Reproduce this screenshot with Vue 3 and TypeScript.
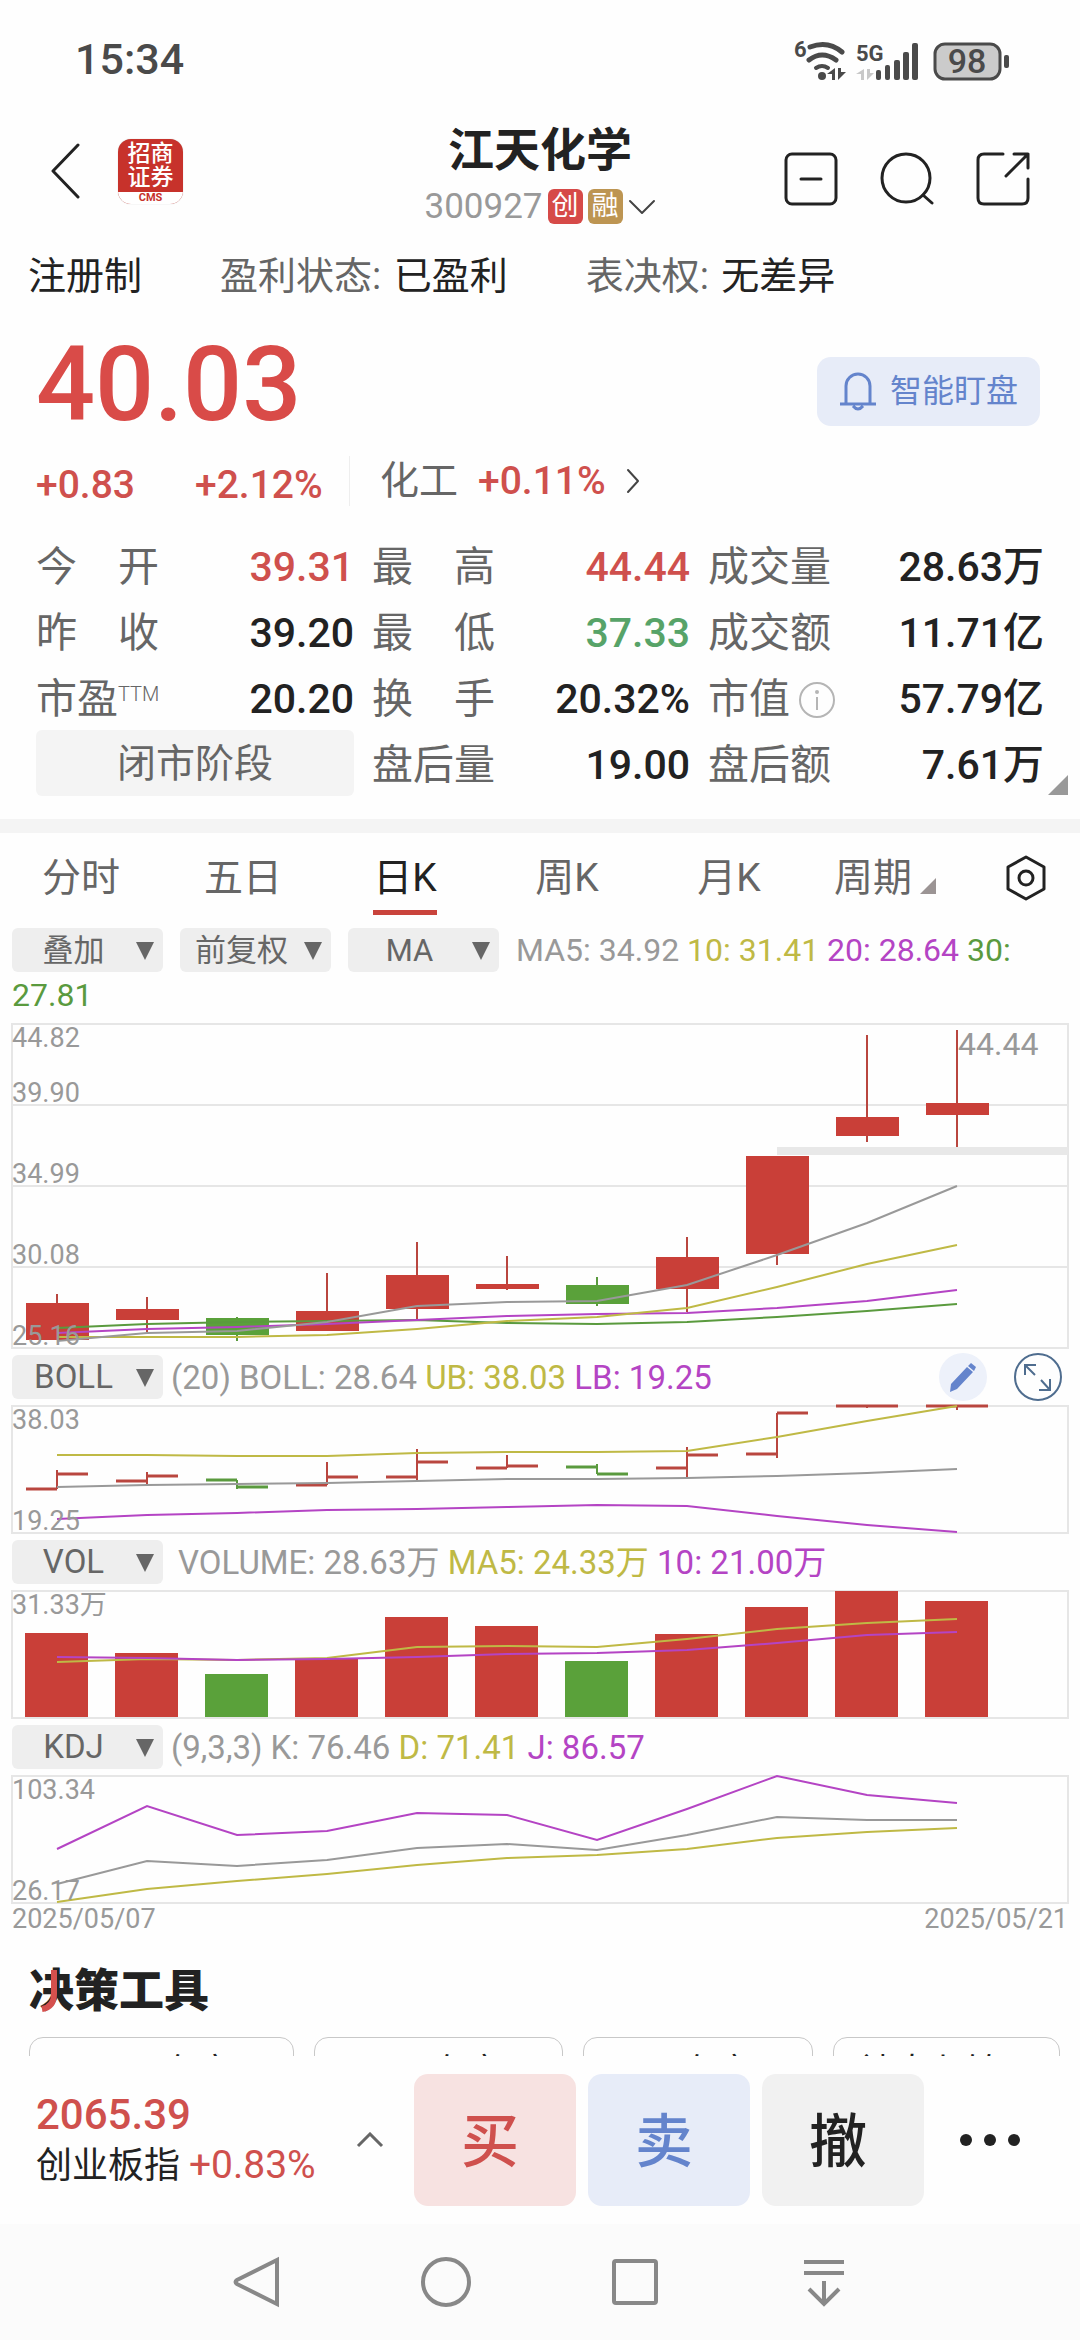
<script setup lang="ts">
interface Metric {
  label: string
  value: string
  tone?: 'up' | 'down'
  sup?: string
  info?: boolean
}
interface Reading {
  text: string
  tone: 'grey' | 'yellow' | 'purple' | 'green'
}
interface Line {
  tone: string
  ys: number[]
}
interface AxisLabel {
  text: string
  y: number
}

const STEP = 90
const FIRST = 45
const BAR = 63
const cx = (i: number): number => FIRST + STEP * i
const points = (ys: number[]): string => ys.map((y, i) => `${cx(i)},${y}`).join(' ')

const metrics: Metric[] = [
  { label: '今 开', value: '39.31', tone: 'up' },
  { label: '最 高', value: '44.44', tone: 'up' },
  { label: '成交量', value: '28.63万' },
  { label: '昨 收', value: '39.20' },
  { label: '最 低', value: '37.33', tone: 'down' },
  { label: '成交额', value: '11.71亿' },
  { label: '市盈', sup: 'TTM', value: '20.20' },
  { label: '换 手', value: '20.32%' },
  { label: '市值', info: true, value: '57.79亿' },
]
const afterHours: Metric[] = [
  { label: '盘后量', value: '19.00' },
  { label: '盘后额', value: '7.61万' },
]

const tabs: string[] = ['分时', '五日', '日K', '周K', '月K']
const activeTab = '日K'

const maReadings: Reading[] = [
  { text: 'MA5: 34.92', tone: 'grey' },
  { text: '10: 31.41', tone: 'yellow' },
  { text: '20: 28.64', tone: 'purple' },
  { text: '30: 27.81', tone: 'green' },
]

// [body top, body bottom, high, low]
const candles: number[][] = [
  [279, 316, 270, 316],
  [285, 296, 273, 308],
  [294, 311, 293, 317],
  [287, 307, 249, 307],
  [251, 285, 218, 296],
  [260, 265, 232, 266],
  [261, 280, 253, 282],
  [233, 265, 213, 288],
  [132, 230, 132, 241],
  [93, 112, 11, 118],
  [79, 91, 6, 123],
]
const falling = (i: number): boolean => i === 2 || i === 6

const priceLines: Line[] = [
  { tone: 'green', ys: [304, 300, 298, 297, 296, 299, 300, 298, 293, 287, 280] },
  { tone: 'purple', ys: [309, 305, 303, 300, 296, 292, 290, 289, 284, 277, 266] },
  { tone: 'yellow', ys: [313, 313, 313, 311, 305, 297, 293, 284, 263, 240, 221] },
  { tone: 'grey', ys: [317, 309, 307, 298, 282, 278, 277, 261, 231, 199, 162] },
]
const priceLabels: AxisLabel[] = [
  { text: '44.82', y: 23 },
  { text: '39.90', y: 78 },
  { text: '34.99', y: 159 },
  { text: '30.08', y: 240 },
  { text: '25.16', y: 321 },
]

// [open, close, high, low]
const ohlc: number[][] = [
  [83, 68, 64, 83],
  [75, 70, 66, 80],
  [74, 81, 74, 83],
  [79, 71, 56, 79],
  [71, 56, 43, 75],
  [62, 60, 49, 62],
  [61, 68, 58, 68],
  [62, 49, 41, 72],
  [48, 7, 7, 52],
  [0, 0, 0, 2],
  [0, 0, 0, 4],
]
const volumes: number[] = [42, 62, 83, 68, 26, 35, 70, 43, 16, 0, 10]

interface Panel {
  name: string
  wide: boolean
  readings: Reading[]
  lines: Line[]
  labels: AxisLabel[]
}
const panels: Panel[] = [
  {
    name: 'BOLL',
    wide: false,
    readings: [
      { text: '(20) BOLL: 28.64', tone: 'grey' },
      { text: 'UB: 38.03', tone: 'yellow' },
      { text: 'LB: 19.25', tone: 'purple' },
    ],
    lines: [
      { tone: 'grey', ys: [81, 79, 78, 77, 75, 73, 73, 72, 70, 67, 63] },
      { tone: 'yellow', ys: [49, 49, 50, 50, 47, 46, 46, 45, 31, 15, 0] },
      { tone: 'purple', ys: [113, 109, 107, 104, 103, 101, 99, 100, 110, 119, 126] },
    ],
    labels: [{ text: '38.03', y: 23 }, { text: '19.25', y: 124 }],
  },
  {
    name: 'VOL',
    wide: true,
    readings: [
      { text: 'VOLUME: 28.63万', tone: 'grey' },
      { text: 'MA5: 24.33万', tone: 'yellow' },
      { text: '10: 21.00万', tone: 'purple' },
    ],
    lines: [
      { tone: 'yellow', ys: [71, 68, 69, 67, 56, 55, 56, 48, 38, 32, 28] },
      { tone: 'purple', ys: [66, 67, 69, 68, 66, 63, 62, 59, 52, 44, 41] },
    ],
    labels: [{ text: '31.33万', y: 23 }],
  },
  {
    name: 'KDJ',
    wide: false,
    readings: [
      { text: '(9,3,3) K: 76.46', tone: 'grey' },
      { text: 'D: 71.41', tone: 'yellow' },
      { text: 'J: 86.57', tone: 'purple' },
    ],
    lines: [
      { tone: 'grey', ys: [108, 85, 90, 84, 72, 68, 74, 59, 41, 44, 44] },
      { tone: 'yellow', ys: [126, 113, 105, 98, 89, 82, 79, 73, 62, 56, 52] },
      { tone: 'purple', ys: [73, 30, 59, 55, 37, 39, 64, 33, 0, 19, 27] },
    ],
    labels: [{ text: '103.34', y: 23 }, { text: '26.17', y: 124 }],
  },
]

const tools: string[] = ['MACD 有变？', 'BOLL 有变？', 'KDJ 有变？', '神奇九转？', '主力动向？']
</script>

<template>
  <div class="app">
    <div class="status">
      <span class="clock">15:34</span>
      <svg class="signals" width="216" height="44" viewBox="0 0 216 44" aria-hidden="true">
        <text x="0" y="19" class="sig-small">6</text>
        <g fill="none" stroke="#4a4a4a" stroke-width="5" stroke-linecap="round">
          <path d="M16 9Q34 2 48 14" />
          <path d="M15 22Q28 12 42 22" />
          <path d="M22 30Q28 26 34 30" stroke-width="4" />
        </g>
        <circle cx="28" cy="38" r="4" fill="#4a4a4a" />
        <g fill="#4a4a4a">
          <path d="M41 30v12h-3v-6h-5zM44 42V30h3v4h5z" />
        </g>
        <text x="62" y="23" class="sig-net">5G</text>
        <path d="M70 31v11h-3v-6h-5zM73 42V31h3v4h4z" fill="#c8c8c8" />
        <g fill="#4a4a4a">
          <rect x="82" y="32" width="5" height="10" rx="2" />
          <rect x="91" y="27" width="5" height="15" rx="2" />
          <rect x="100" y="22" width="6" height="20" rx="2" />
          <rect x="109" y="14" width="6" height="28" rx="2" />
          <rect x="118" y="5" width="6" height="37" rx="2" />
        </g>
        <rect x="141" y="6" width="65" height="35" rx="10" fill="#cbcbcb" stroke="#4a4a4a" stroke-width="3" />
        <rect x="210" y="17" width="5" height="13" rx="2" fill="#4a4a4a" />
        <text x="173" y="35" text-anchor="middle" class="sig-bat">98</text>
      </svg>
    </div>

    <header class="header">
      <div class="header-left">
        <button class="bare" aria-label="返回">
          <svg width="30" height="56" viewBox="0 0 30 56"><path d="M28 2L3 28L28 54" class="stroke-dark" /></svg>
        </button>
        <div class="logo">
          <span class="logo-name">招商<br />证券</span>
          <span class="logo-code">CMS</span>
        </div>
      </div>
      <div class="header-mid">
        <h1>江天化学</h1>
        <div class="code">
          <span>300927</span>
          <i class="badge badge-red">创</i>
          <i class="badge badge-gold">融</i>
          <svg width="28" height="16" viewBox="0 0 28 16"><path d="M2 2L14 14L26 2" class="stroke-dark thin" /></svg>
        </div>
      </div>
      <div class="header-right">
        <button class="bare" aria-label="移除自选">
          <svg width="54" height="54" viewBox="0 0 54 54">
            <rect x="2" y="2" width="50" height="50" rx="6" class="stroke-dark" />
            <path d="M17 27H37" class="stroke-dark" />
          </svg>
        </button>
        <button class="bare" aria-label="搜索">
          <svg width="54" height="54" viewBox="0 0 54 54">
            <circle cx="26" cy="26" r="24" class="stroke-dark" />
            <path d="M43 43L52 51" class="stroke-dark" />
          </svg>
        </button>
        <button class="bare" aria-label="分享">
          <svg width="54" height="54" viewBox="0 0 54 54">
            <path d="M27 2H8Q2 2 2 8V46Q2 52 8 52H46Q52 52 52 46V27M38 2H52V16M52 2L30 24" class="stroke-dark" />
          </svg>
        </button>
      </div>
    </header>

    <main class="content">
      <section class="facts">
        <span class="plain">注册制</span>
        <span>盈利状态: <b>已盈利</b></span>
        <span>表决权: <b>无差异</b></span>
      </section>

      <section class="price">
        <div class="price-top">
          <strong>40.03</strong>
          <button class="watch">
            <svg width="38" height="40" viewBox="0 0 38 40" aria-hidden="true">
              <path d="M7 33V15a12 12 0 0 1 24 0v18M1 33H37M14 35Q19 41 24 35" fill="none" stroke="#6484cc" stroke-width="3" />
            </svg>
            <span>智能盯盘</span>
          </button>
        </div>
        <div class="price-sub">
          <span class="change">+0.83</span>
          <span class="change">+2.12%</span>
          <a href="#sector" class="sector">
            <span>化工</span><em>+0.11%</em>
            <svg width="14" height="26" viewBox="0 0 14 26"><path d="M2 2L12 13L2 24" class="stroke-dark thin" /></svg>
          </a>
        </div>
      </section>

      <section class="metrics">
        <dl>
          <div v-for="m in metrics" :key="m.label" class="metric">
            <dt :class="{ spread: !m.sup && !m.info }">
              {{ m.label }}<sup v-if="m.sup">{{ m.sup }}</sup>
              <svg v-if="m.info" width="38" height="38" viewBox="0 0 38 38">
                <circle cx="19" cy="19" r="17" fill="none" stroke="#b5b5b5" stroke-width="2" />
                <circle cx="19" cy="11" r="2" fill="#b5b5b5" />
                <path d="M19 16V29" stroke="#b5b5b5" stroke-width="2" />
              </svg>
            </dt>
            <dd :class="m.tone">{{ m.value }}</dd>
          </div>
          <div class="phase">闭市阶段</div>
          <div v-for="m in afterHours" :key="m.label" class="metric">
            <dt class="spread">{{ m.label }}</dt>
            <dd>{{ m.value }}</dd>
          </div>
        </dl>
        <svg class="corner" width="20" height="20" viewBox="0 0 20 20" aria-hidden="true"><path d="M20 0V20H0Z" fill="#999" /></svg>
      </section>

      <nav class="tabs">
        <button v-for="t in tabs" :key="t" class="tab" :class="{ active: t === activeTab }"><span>{{ t }}</span></button>
        <button class="tab period">
          <span>周期</span>
          <svg width="16" height="16" viewBox="0 0 16 16" aria-hidden="true"><path d="M16 0V16H0Z" fill="#9b9494" /></svg>
        </button>
        <button class="tab" aria-label="设置">
          <svg width="42" height="46" viewBox="0 0 42 46">
            <path d="M21 2L39 12V34L21 44L3 34V12Z" class="stroke-dark" />
            <circle cx="21" cy="23" r="7" class="stroke-dark" />
          </svg>
        </button>
      </nav>

      <section class="charts">
        <div class="ma-row">
          <label class="picker"><select aria-label="叠加"><option>叠加</option></select><i></i></label>
          <label class="picker"><select aria-label="复权方式"><option>前复权</option></select><i></i></label>
          <label class="picker"><select aria-label="主图指标"><option>MA</option></select><i></i></label>
          <span v-for="r in maReadings" :key="r.text" :class="r.tone">{{ r.text + ' ' }}</span>
        </div>
        <svg class="plot" viewBox="0 0 1056 324" role="img" aria-label="日K线图">
          <path d="M0 81H1056M0 162H1056M0 243H1056" class="grid" />
          <rect x="0" y="0" width="1056" height="324" class="grid" />
          <rect x="765" y="123" width="291" height="8" fill="#e8e8e8" />
          <g v-for="(c, i) in candles" :key="i" :class="falling(i) ? 'fall' : 'rise'">
            <path :d="`M${cx(i)} ${c[2]}V${c[3]}`" />
            <rect :x="cx(i) - 31" :y="c[0]" :width="BAR" :height="c[1] - c[0]" />
          </g>
          <polyline v-for="l in priceLines" :key="l.tone" :points="points(l.ys)" class="line" :class="`line-${l.tone}`" />
          <text v-for="a in priceLabels" :key="a.text" x="0" :y="a.y" class="axis">{{ a.text }}</text>
          <text x="946" y="31" class="peak">44.44</text>
        </svg>

        <template v-for="p in panels" :key="p.name">
          <div class="panel-head">
            <label class="picker"><select :aria-label="p.name"><option>{{ p.name }}</option></select><i></i></label>
            <p :class="{ wide: p.wide }"><span v-for="r in p.readings" :key="r.text" :class="r.tone">{{ r.text + ' ' }}</span></p>
            <div v-if="p.name === 'BOLL'" class="panel-tools">
              <button class="bare" aria-label="画线">
                <svg width="48" height="48" viewBox="0 0 48 48">
                  <circle cx="24" cy="24" r="24" fill="#edf1fa" />
                  <path d="M32 10L37 14L35 18L29 13ZM28 14L34 19L18 36L11 39L12 31Z" fill="#6484cc" />
                </svg>
              </button>
              <button class="bare" aria-label="全屏">
                <svg width="48" height="48" viewBox="0 0 48 48">
                  <g fill="none" stroke="#4f6d8f" stroke-width="2">
                    <circle cx="24" cy="24" r="23" />
                    <path d="M11 22V12H22M11 12L21 22M36 26V37H25M36 37L27 27" />
                  </g>
                </svg>
              </button>
            </div>
          </div>
          <svg class="plot" viewBox="0 0 1056 127" role="img" :aria-label="p.name">
            <rect x="0" y="0" width="1056" height="127" class="grid" />
            <template v-if="p.name === 'BOLL'">
              <path
                v-for="(b, i) in ohlc"
                :key="i"
                :class="falling(i) ? 'fall' : 'rise'"
                class="ohlc"
                :d="`M${cx(i)} ${b[2]}V${b[3]}`"
              />
              <path
                v-for="(b, i) in ohlc"
                :key="`tick-${i}`"
                :class="falling(i) ? 'fall' : 'rise'"
                class="ohlc tick"
                :d="`M${cx(i) - 31} ${b[0]}H${cx(i)}M${cx(i)} ${b[1]}H${cx(i) + 31}`"
              />
            </template>
            <template v-if="p.name === 'VOL'">
              <g v-for="(v, i) in volumes" :key="i" :class="falling(i) ? 'fall' : 'rise'">
                <rect :x="cx(i) - 32" :y="v" :width="BAR" :height="126 - v" />
              </g>
            </template>
            <polyline v-for="l in p.lines" :key="l.tone" :points="points(l.ys)" class="line" :class="`line-${l.tone}`" />
            <text v-for="a in p.labels" :key="a.text" x="0" :y="a.y" class="axis">{{ a.text }}</text>
          </svg>
        </template>
        <div class="dates"><span>2025/05/07</span><span>2025/05/21</span></div>
      </section>

      <section class="decide">
        <h2>
          决策工具
          <svg width="24" height="46" viewBox="0 0 24 46" aria-hidden="true"><path d="M14 0V24Q14 37 2 39" fill="none" stroke="#d5504d" stroke-width="6" /></svg>
        </h2>
        <div class="tools"><button v-for="t in tools" :key="t">{{ t }}</button></div>
      </section>
    </main>

    <footer class="trade">
      <div class="index">
        <div>
          <strong>2065.39</strong>
          <p>创业板指 <em>+0.83%</em></p>
        </div>
        <svg width="28" height="16" viewBox="0 0 28 16" aria-hidden="true"><path d="M2 14L14 2L26 14" fill="none" stroke="#666" stroke-width="3" /></svg>
      </div>
      <button class="act buy">买</button>
      <button class="act sell">卖</button>
      <button class="act cancel">撤</button>
      <button class="bare more" aria-label="更多">
        <svg width="62" height="14" viewBox="0 0 62 14"><circle cx="7" cy="7" r="6" /><circle cx="31" cy="7" r="6" /><circle cx="55" cy="7" r="6" /></svg>
      </button>
    </footer>

    <nav class="system">
      <button class="bare" aria-label="后退"><svg width="52" height="52" viewBox="0 0 52 52"><path d="M46 4V48L6 28Q3 26 6 24Z" /></svg></button>
      <button class="bare" aria-label="主页"><svg width="52" height="52" viewBox="0 0 52 52"><circle cx="26" cy="26" r="23" /></svg></button>
      <button class="bare" aria-label="最近"><svg width="52" height="52" viewBox="0 0 52 52"><rect x="5" y="5" width="42" height="42" rx="2" /></svg></button>
      <button class="bare" aria-label="收起"><svg width="52" height="52" viewBox="0 0 52 52"><path d="M6 6H46M6 17H46M26 25V48M11 33L26 48L41 33" /></svg></button>
    </nav>
  </div>
</template>

<style>
body {
  margin: 0;
  background: #fefefe;
}
</style>

<style scoped>
.app {
  display: flex;
  flex-direction: column;
  height: 100vh;
  color: #222;
  background: #fefefe;
  font-family: Roboto, "Noto Sans CJK SC", sans-serif;
  line-height: 1.2;
  overflow: hidden;
}
button,
select {
  font: inherit;
  color: inherit;
  margin: 0;
  padding: 0;
  border: 0;
}
h1,
h2,
p,
dl,
dd {
  margin: 0;
}
em,
i {
  font-style: normal;
}
svg {
  display: block;
}
.bare {
  background: none;
}
.stroke-dark {
  fill: none;
  stroke: #222;
  stroke-width: 3;
  stroke-linecap: round;
  stroke-linejoin: round;
}
.thin {
  stroke: #444;
  stroke-width: 2;
}
.status {
  flex: none;
  display: flex;
  justify-content: space-between;
  align-items: center;
  height: 120px;
  padding: 0 70px 0 75px;
  color: #4a4a4a;
}
.clock {
  font-size: 43px;
  font-weight: 500;
}
.signals text {
  fill: #4a4a4a;
  font-weight: 700;
}
.sig-small {
  font-size: 22px;
}
.sig-net {
  font-size: 22px;
}
.signals .sig-bat {
  font-size: 34px;
  font-weight: 500;
}
.header {
  flex: none;
  display: grid;
  grid-template-columns: 1fr auto 1fr;
  align-items: center;
  height: 118px;
  padding: 0 50px;
}
.header-left {
  display: flex;
  align-items: center;
  gap: 38px;
  padding-bottom: 16px;
}
.logo {
  display: flex;
  flex-direction: column;
  width: 65px;
  height: 65px;
  border-radius: 13px;
  background: #c7322b;
  overflow: hidden;
  text-align: center;
  box-shadow: 0 0 1px #bbb;
}
.logo-name {
  flex: 1;
  padding-top: 3px;
  color: #fff;
  font-size: 23px;
  line-height: 24px;
  font-weight: 500;
}
.logo-code {
  background: #fff;
  color: #c7322b;
  font-size: 11px;
  line-height: 12px;
  font-weight: 700;
}
.header-mid {
  display: flex;
  flex-direction: column;
  align-items: center;
  padding-bottom: 12px;
}
h1 {
  font-size: 46px;
  line-height: 56px;
  font-weight: 700;
  margin-bottom: 11px;
}
.code {
  display: flex;
  align-items: center;
  gap: 5px;
  color: #999;
  font-size: 35px;
  line-height: 36px;
}
.badge {
  width: 35px;
  height: 35px;
  border-radius: 6px;
  color: #fff;
  font-size: 27px;
  line-height: 35px;
  text-align: center;
}
.badge-red {
  background: #d64a48;
}
.badge-gold {
  background: #bd9552;
}
.header-right {
  display: flex;
  justify-content: flex-end;
  gap: 42px;
}
.content {
  flex: 1;
  min-height: 0;
  overflow: hidden;
}
.facts {
  display: flex;
  gap: 78px;
  padding: 0 28px;
  font-size: 38px;
  line-height: 76px;
  color: #666;
  white-space: nowrap;
}
.facts b {
  margin-left: 3px;
  font-weight: 400;
  color: #222;
}
.facts .plain {
  color: #222;
}
.price {
  padding: 0 40px 0 36px;
}
.price-top {
  display: flex;
  justify-content: space-between;
  align-items: center;
  height: 142px;
}
.price-top strong {
  font-size: 104px;
  font-weight: 500;
  color: #d94b48;
}
.watch {
  display: flex;
  align-items: center;
  justify-content: center;
  gap: 13px;
  width: 223px;
  height: 69px;
  margin-top: 12px;
  border-radius: 14px;
  background: #e7ecf8;
  color: #6484cc;
  font-size: 32px;
}
.price-sub {
  display: flex;
  align-items: center;
  height: 50px;
  padding-bottom: 26px;
  font-size: 39px;
}
.change {
  width: 159px;
  padding-top: 8px;
  font-weight: 500;
  color: #cf504d;
}
.change + .change {
  width: 154px;
}
.sector {
  display: flex;
  align-items: center;
  gap: 20px;
  height: 50px;
  padding-left: 30px;
  border-left: 1px solid #eee;
  color: #666;
  text-decoration: none;
}
.sector em {
  font-weight: 500;
  color: #cf504d;
}
.metrics {
  position: relative;
  padding: 0 36px 23px;
  border-bottom: 14px solid #f4f4f4;
}
.metrics dl {
  display: grid;
  grid-template-columns: 318fr 318fr 336fr;
  column-gap: 18px;
  grid-auto-rows: 66px;
  font-size: 41px;
}
.metric {
  display: flex;
  justify-content: space-between;
  align-items: center;
  padding-top: 6px;
}
.metric dt {
  display: flex;
  align-items: center;
  color: #666;
}
.metric dt.spread {
  display: block;
  width: 123px;
  text-align-last: justify;
}
.metric dt svg {
  margin-left: 8px;
}
.metric sup {
  align-self: flex-start;
  font-size: 20px;
  line-height: 38px;
  font-weight: 300;
}
.metric dd {
  font-weight: 500;
}
.metric .up {
  color: #cf504d;
}
.metric .down {
  color: #57a368;
}
.phase {
  border-radius: 6px;
  background: #f4f4f4;
  color: #666;
  font-size: 39px;
  line-height: 68px;
  text-align: center;
}
.corner {
  position: absolute;
  right: 12px;
  bottom: 24px;
}
.tabs {
  display: grid;
  grid-template-columns: repeat(6, 162fr) 108fr;
  height: 89px;
  padding-bottom: 6px;
}
.tab {
  display: flex;
  justify-content: center;
  align-items: center;
  background: none;
  color: #666;
  font-size: 39px;
}
.tab span {
  border-top: 5px solid transparent;
  border-bottom: 5px solid transparent;
  line-height: 64px;
}
.active {
  color: #222;
}
.active span {
  border-bottom-color: #c9433c;
}
.period {
  gap: 8px;
  padding-right: 12px;
}
.period svg {
  margin-top: 16px;
}
.charts {
  padding: 0 12px;
  font-size: 33px;
}
.ma-row {
  font-size: 32px;
  line-height: 45px;
  padding-bottom: 6px;
}
.picker {
  position: relative;
  display: inline-block;
  vertical-align: top;
  width: 151px;
  height: 44px;
}
.ma-row .picker {
  margin-right: 17px;
}
.picker select {
  width: 100%;
  height: 44px;
  padding-right: 28px;
  border-radius: 6px;
  background: #eee;
  color: #666;
  appearance: none;
  text-align: center;
  text-align-last: center;
}
.ma-row .picker select {
  font-size: 31px;
}
.picker i {
  position: absolute;
  right: 9px;
  top: 14px;
  border: 9px solid transparent;
  border-top: 18px solid #666;
  border-bottom: 0;
}
.grey {
  color: #999;
}
.yellow {
  color: #bfb945;
}
.purple {
  color: #b444c4;
}
.green {
  color: #5a9a3e;
}
.plot {
  width: 100%;
  overflow: visible;
}
.grid {
  fill: none;
  stroke: #e6e6e6;
  stroke-width: 2;
}
.rise {
  fill: #c93f38;
  stroke: #b9463f;
}
.fall {
  fill: #5aa13a;
  stroke: #5a9a3e;
}
.rise path,
.fall path,
.ohlc {
  fill: none;
  stroke-width: 2;
}
.ohlc.tick {
  stroke-width: 3;
}
.rise rect,
.fall rect {
  stroke: none;
}
.line {
  fill: none;
  stroke-width: 2;
}
.line-grey {
  stroke: #999;
}
.line-yellow {
  stroke: #bfb945;
}
.line-purple {
  stroke: #b444c4;
}
.line-green {
  stroke: #5a9a3e;
}
.axis {
  fill: #999;
  font-size: 27px;
}
.peak {
  fill: #999;
  font-size: 32px;
}
.panel-head {
  display: flex;
  height: 44px;
  padding: 7px 6px 7px 0;
}
.panel-head p {
  padding-left: 8px;
  line-height: 45px;
  white-space: nowrap;
}
.panel-head p.wide {
  padding-left: 15px;
}
.panel-tools {
  display: flex;
  gap: 27px;
  height: 44px;
  align-items: center;
  margin-left: auto;
}
.dates {
  display: flex;
  justify-content: space-between;
  font-size: 27px;
  line-height: 32px;
  color: #999;
}
.decide {
  padding: 26px 0 0 29px;
}
h2 {
  position: relative;
  font-size: 45px;
  line-height: 62px;
  font-weight: 900;
}
h2 svg {
  position: absolute;
  left: 11px;
  top: 9px;
}
.tools {
  display: flex;
  gap: 20px;
  padding-top: 14px;
  overflow: hidden;
}
.tools button {
  flex: none;
  height: 72px;
  padding: 0 25px;
  border: 1px solid #c8c8c8;
  border-radius: 14px;
  background: #fefefe;
  font-size: 35px;
  line-height: 66px;
}
.trade {
  flex: none;
  display: grid;
  grid-template-columns: 366fr 162fr 162fr 162fr 108fr;
  gap: 12px;
  align-items: center;
  height: 168px;
  padding: 0 36px;
}
.index {
  display: flex;
  justify-content: space-between;
  align-items: center;
  padding-right: 18px;
  white-space: nowrap;
}
.index strong {
  display: block;
  font-size: 42px;
  line-height: 50px;
  font-weight: 500;
  color: #cf504d;
}
.index p {
  font-size: 36px;
  line-height: 50px;
}
.index em {
  font-size: 39px;
  color: #cf504d;
}
.act {
  height: 132px;
  padding: 6px 10px 0 0;
  border-radius: 14px;
  font-size: 58px;
  font-weight: 500;
}
.buy {
  background: #f7e2e1;
  color: #cf504d;
}
.sell {
  background: #e7ecf8;
  color: #6484cc;
}
.cancel {
  background: #f1f1f1;
}
.more {
  display: flex;
  justify-content: center;
}
.more svg {
  fill: #222;
}
.system {
  flex: none;
  display: flex;
  height: 116px;
  padding: 0 15%;
  background: #fbfbfb;
}
.system button {
  flex: 1;
  display: flex;
  justify-content: center;
  align-items: center;
}
.system svg {
  fill: none;
  stroke: #888;
  stroke-width: 4;
}
</style>
